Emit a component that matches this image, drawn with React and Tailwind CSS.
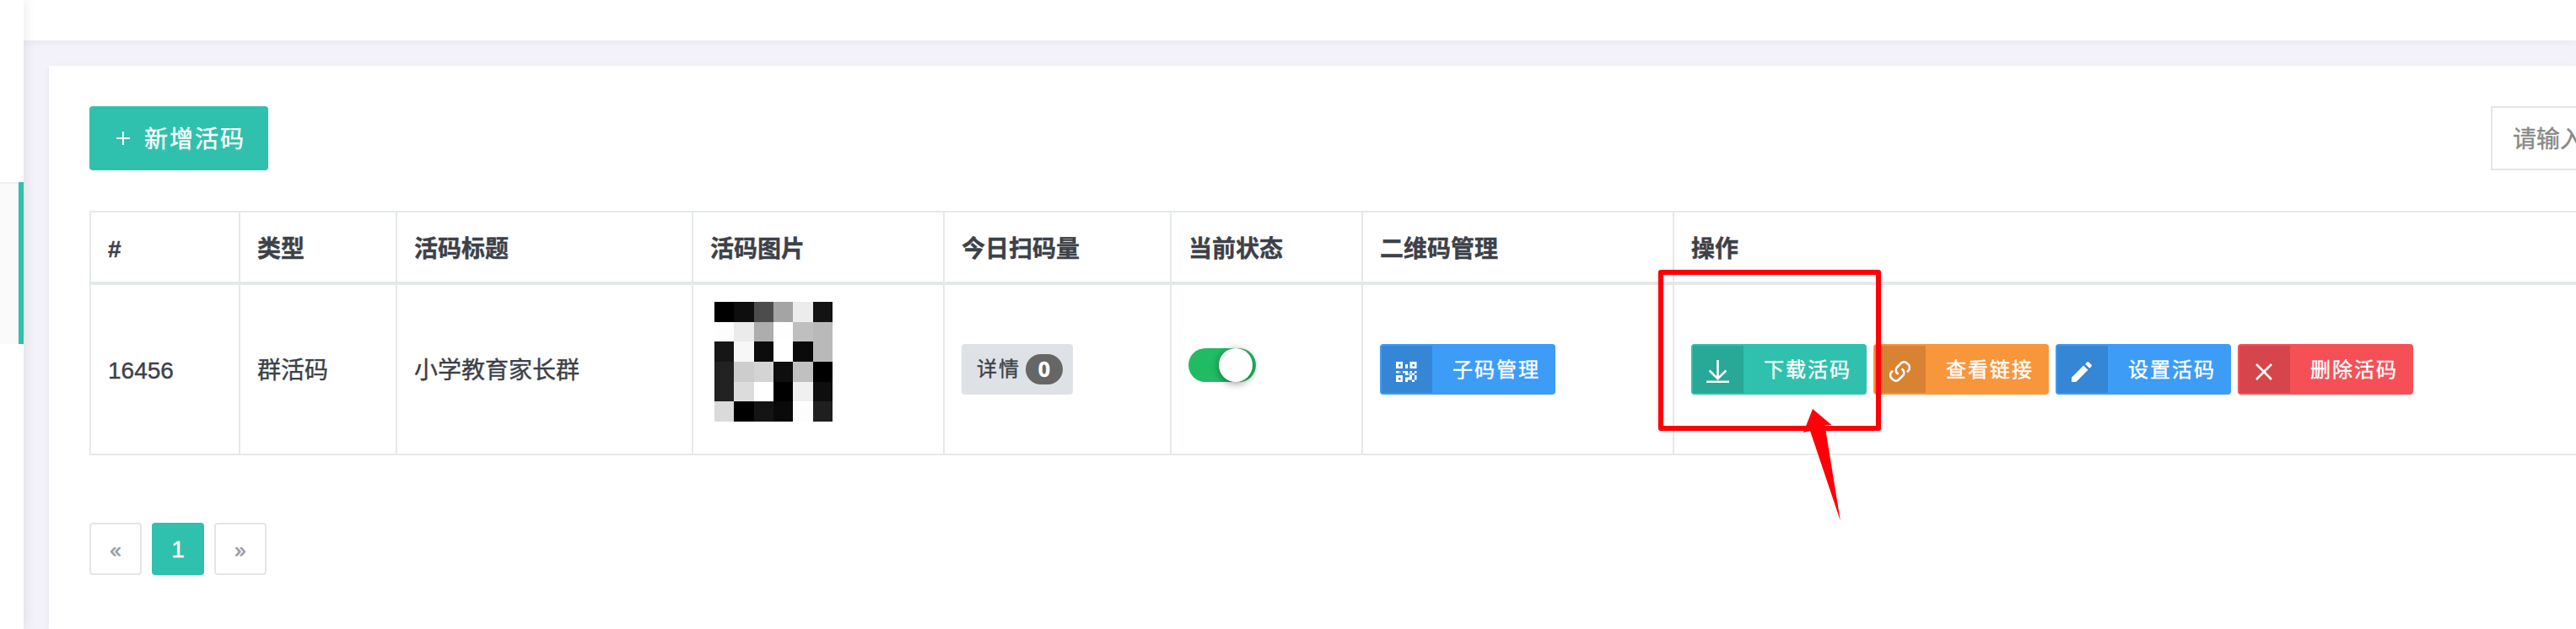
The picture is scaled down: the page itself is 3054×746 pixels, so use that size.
import React, { useState } from 'react';

const columns = [
  { name: '#', width: 'w-[177px]' },
  { name: '类型', width: 'w-[186px]' },
  { name: '活码标题', width: 'w-[351px]' },
  { name: '活码图片', width: 'w-[298px]' },
  { name: '今日扫码量', width: 'w-[269px]' },
  { name: '当前状态', width: 'w-[227px]' },
  { name: '二维码管理', width: 'w-[369px]' },
  { name: '操作', width: 'w-[1200px]' },
];

// Grey levels of the pixelated code image, row by row
const mosaic = [
  ['#000000', '#0e0e0e', '#4c4c4c', '#a4a4a4', '#ececec', '#131313'],
  ['#fdfdfd', '#ebebeb', '#adadad', '#fefefe', '#bfbfbf', '#b9b9b9'],
  ['#161616', '#f7f7f7', '#0c0c0c', '#ffffff', '#0a0a0a', '#b9b9b9'],
  ['#222222', '#cdcdcd', '#d4d4d4', '#0e0e0e', '#c0c0c0', '#000000'],
  ['#222222', '#dcdcdc', '#ffffff', '#000000', '#f0f0f0', '#0e0e0e'],
  ['#dadada', '#000000', '#141414', '#0a0a0a', '#fdfdfd', '#1f1f1f'],
];

const QrIcon = () => (
  <svg className="h-6 w-[25px]" viewBox="0 0 25 24" fill="currentColor">
    <path fillRule="evenodd" d="M0 0h8v8H0zM3 3v2.5h2.5V3zM16.500 0h8v8h-8zM19.500 3v2.500H22V3zM0 16h8v8H0zM3 19v2.500h2.500V19z" />
    <path d="M11 3h3v5h-3zM0 11h3v2.500H0zM8 11h6v5h-3v-2.500H8zM16.500 11H19v2.500h-2.500zM22 11h2.500v2.500H22zM19 13.500h3V16h-3zM22 16h2.500v5.500H22zM11 18.500h5V16h3v5.500h-5V24h-3zM19 21.500h3V24h-3z" />
    <path opacity="0.5" d="M3 11h2.500v2.500H3zM14 13.500h5V16h-5z" />
  </svg>
);

const DownloadIcon = () => (
  <svg className="h-[27px] w-[27px]" viewBox="0 0 27 27" fill="none" stroke="currentColor" strokeWidth="2.600">
    <path d="M13.500 0v22M3.600 12.500l9.900 9.600 9.900-9.600M0 25.700h27" />
  </svg>
);

const LinkIcon = () => (
  <svg className="h-[25px] w-[25px]" viewBox="0 0 25 25" fill="none" stroke="currentColor" strokeWidth="2.600">
    <path d="M4 11.700l-1.200 1.400a5.100 5.100 0 0 0 0 7.800l1.300 1.300a5 5 0 0 0 7 0l4.600-4.500a5 5 0 0 0 0-7.400l-1.400-1M21 13.300l1.200-1.400a5.100 5.100 0 0 0 0-7.800l-1.300-1.300a5 5 0 0 0-7 0L9.300 7.300a5 5 0 0 0 0 7.400l1.400 1" />
  </svg>
);

const PencilIcon = () => (
  <svg className="h-6 w-6" viewBox="0 0 24 24" fill="currentColor">
    <path d="M0 24v-5.300L14.200 4.600l5.200 5.200L5.300 24zM16.200 2.700l2-2q1.200-1.200 2.400 0l2.700 2.700q1.200 1.200 0 2.400l-2 2z" />
  </svg>
);

const CloseIcon = () => (
  <svg className="h-5 w-5" viewBox="0 0 20 20" fill="none" stroke="currentColor" strokeWidth="2.500">
    <path d="M1 1l18 18M19 1L1 19" />
  </svg>
);

const LabelButton = ({ icon, color, children }) => (
  <button type="button" className={`flex h-[60px] w-[208px] shrink-0 items-center rounded-[4px] p-[2px] text-white ${color}`}>
    <span className="flex h-14 w-[60px] shrink-0 items-center justify-center bg-black/[0.13] pt-[5px] pr-[2px]">{icon}</span>
    <span className="pt-px pl-6 text-2xl tracking-[2px] whitespace-nowrap">{children}</span>
  </button>
);

const App = () => {
  const [enabled, setEnabled] = useState(true);

  return (
    <div className="relative flex h-[746px] w-full overflow-hidden bg-[#f2f2f8] font-['Liberation_Sans','Noto_Sans_CJK_SC',sans-serif] text-[28px] text-[#3d4148] [-webkit-text-stroke:0.4px]">
      <aside className="z-10 w-7 shrink-0 bg-white pt-[216px] shadow-[0_0_16px_rgba(0,0,0,0.1)]">
        <div className="h-48 border-r-6 border-[#2fc1ad] bg-[#fafafa]">
          <div className="h-[2px] bg-[#f0f0f0]" />
        </div>
      </aside>

      <div className="flex min-w-0 flex-1 flex-col">
        <header className="h-12 shrink-0 bg-white shadow-[0_2px_10px_rgba(0,0,0,0.05)]" />

        <main className="mt-[30px] ml-[30px] flex-1 overflow-hidden bg-white pt-12 pl-12 shadow-[0_2px_8px_rgba(0,0,0,0.05)]">
          <div className="flex justify-between">
            <button type="button" className="flex h-[76px] w-[212px] items-center rounded-[4px] bg-[#2fc1ad] pl-8 text-white">
              <svg className="mr-[17px] h-4 w-4" viewBox="0 0 16 16" stroke="currentColor" strokeWidth="2">
                <path d="M8 0v16M0 8h16" />
              </svg>
              <span className="pt-1 tracking-[2px]">新增活码</span>
            </button>
            <div className="flex h-[76px] w-[101px] items-center overflow-hidden border-2 border-r-0 border-[#e5e5e5] pt-[3px] pl-6 whitespace-nowrap text-[#888888]">
              请输入
            </div>
          </div>

          <table className="mt-12 w-[3079px] table-fixed border-collapse">
            <thead>
              <tr className="h-[85px]">
                {columns.map((column) => (
                  <th key={column.name} className={`border-2 border-b-4 border-[#e5e9e9] px-5 pt-[5px] text-left font-bold ${column.width}`}>
                    {column.name}
                  </th>
                ))}
              </tr>
            </thead>
            <tbody>
              <tr className="h-[203px] [&>td]:border-2 [&>td]:border-[#e5e9e9] [&>td]:px-5">
                <td className="pt-[3px]">16456</td>
                <td className="pt-[3px]">群活码</td>
                <td className="pt-[3px]">小学教育家长群</td>
                <td>
                  <div className="mb-[18px] ml-[5px] grid h-[142px] w-[140px] grid-cols-6 grid-rows-6">
                    {mosaic.flat().map((shade, index) => (
                      <span key={index} style={{ backgroundColor: shade }} />
                    ))}
                  </div>
                </td>
                <td>
                  <button type="button" className="flex h-[60px] w-[132px] items-center rounded-[4px] bg-[#dee1e6] pl-[18px] text-2xl tracking-[2px]">
                    详情
                    <span className="ml-[6px] flex h-9 w-11 items-center justify-center rounded-full bg-[#666666] pb-px font-['Open_Sans',sans-serif] text-[25px] font-bold tracking-normal text-white">
                      0
                    </span>
                  </button>
                </td>
                <td>
                  <button
                    type="button"
                    onClick={() => setEnabled(!enabled)}
                    className={`mb-[10px] flex h-10 w-20 rounded-full pr-1 ${enabled ? 'justify-end bg-[#21bb63]' : 'bg-gray-300'}`}
                  >
                    <span className="h-10 w-10 rounded-full bg-white shadow-[0_2px_10px_rgba(0,0,0,0.4)]" />
                  </button>
                </td>
                <td>
                  <LabelButton icon={<QrIcon />} color="bg-[#3d9cf6]">子码管理</LabelButton>
                </td>
                <td>
                  <div className="flex gap-2">
                    <LabelButton icon={<DownloadIcon />} color="bg-[#2fc1ad]">下载活码</LabelButton>
                    <LabelButton icon={<LinkIcon />} color="bg-[#f8963c]">查看链接</LabelButton>
                    <LabelButton icon={<PencilIcon />} color="bg-[#3d9cf6]">设置活码</LabelButton>
                    <LabelButton icon={<CloseIcon />} color="bg-[#f65057]">删除活码</LabelButton>
                  </div>
                </td>
              </tr>
            </tbody>
          </table>

          <nav className="mt-20 flex gap-3">
            <button type="button" className="h-[62px] w-[62px] rounded-[4px] border-2 border-[#e5e5e5] pt-[3px] text-2xl text-[#999da2] [-webkit-text-stroke:0.8px]">«</button>
            <button type="button" className="h-[62px] w-[62px] rounded-[4px] bg-[#2fc1ad] pt-[2px] text-white">1</button>
            <button type="button" className="h-[62px] w-[62px] rounded-[4px] border-2 border-[#e5e5e5] pt-[3px] text-2xl text-[#999da2] [-webkit-text-stroke:0.8px]">»</button>
          </nav>
        </main>
      </div>

      {/* Highlight around the download button */}
      <div className="pointer-events-none absolute top-[320px] left-[1966px] z-20 h-[191px] w-[264px] rounded-[3px] border-6 border-[#ff0008] shadow-[0_0_5px_rgba(0,0,0,0.1)]" />
      <svg className="pointer-events-none absolute top-[484px] left-[2137px] z-20 h-[136px] w-[47px]" viewBox="0 0 47 136" fill="#ff0008">
        <path d="M12 1L34.500 20 26.500 20.500 45 134 9 27 1 29z" />
      </svg>
    </div>
  );
};

export default App;
